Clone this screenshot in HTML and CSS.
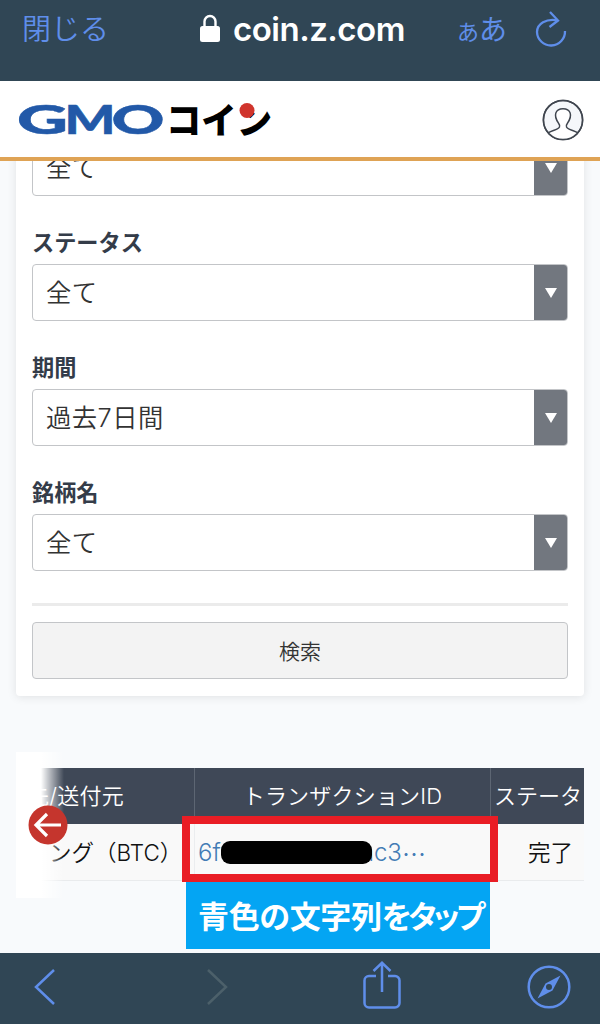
FILE: index.html
```
<!DOCTYPE html>
<html lang="ja">
<head>
    <meta charset="UTF-8">
    <meta name="viewport" content="width=device-width, initial-scale=1.0">
    <title>GMOコイン</title>
    <link rel="stylesheet" href="styles.css">
</head>
<body>
    <!-- browser bar -->
    <div class="browser-bar">
        <span class="close">閉じる</span>
        <div class="address">
            <svg class="lock" width="20" height="29" viewBox="0 0 20 29">
                <path d="M4.5 14V7.5a5.5 5.5 0 0 1 11 0V14" fill="none" stroke="#fff" stroke-width="2.4"/>
                <rect x="0" y="12" width="20" height="16" rx="2.5" fill="#fff"/>
            </svg>
            <span class="domain">coin.z.com</span>
        </div>
        <div class="text-size"><span class="small">あ</span><span class="large">あ</span></div>
        <svg class="reload" width="32" height="38" viewBox="0 0 32 38">
            <path d="M22.500 10.300C11 8.500 2.200 13.500 2 22a14 14 0 0 0 28-1" />
            <path d="M15 2l8 8.500-8.500 6.500" />
        </svg>
    </div>

    <header class="site-header">
        <svg class="logo" width="254" height="34" viewBox="0 0 254 34">
            <g class="logo-gmo">
                <text x="-1" y="30.500" textLength="51" lengthAdjust="spacingAndGlyphs">G</text>
                <text x="46.500" y="30.500" textLength="51" lengthAdjust="spacingAndGlyphs">M</text>
                <text x="93.500" y="30.500" textLength="53" lengthAdjust="spacingAndGlyphs">O</text>
            </g>
            <text class="logo-coin" x="148" y="30.500" textLength="106" lengthAdjust="spacingAndGlyphs">コイン</text>
            <circle cx="229" cy="7.500" r="7.500" fill="#d0342c"/>
        </svg>
        <svg class="user" width="42" height="42" viewBox="0 0 42 42">
            <circle cx="21" cy="21" r="19.6" fill="#f5f7fa"/>
            <path d="M6 34c3-2.500 10-3.500 11.500-6 .8-1.500 0-2.500-1-3.800C11 16 13.500 9.700 21 9.700S31 16 25.500 24.200c-1 1.300-1.800 2.300-1 3.800 1.500 2.500 8.500 3.500 11.500 6Q30 40.500 21 40.500T6 34z" fill="#fff" stroke="none"/>
            <path d="M6 34c3-2.500 10-3 11.500-6 .8-1.500 0-2.500-1-3.800C11 16 13.500 9.700 21 9.700S31 16 25.500 24.200c-1 1.300-1.800 2.300-1 3.800 1.500 3 8.500 3.500 11.500 6"/>
            <circle cx="21" cy="21" r="19.6"/>
        </svg>
    </header>

    <main class="content">
        <div class="card">
            <div class="select"><span>全て</span><i class="arrow"></i></div>
            <label class="label">ステータス</label>
            <div class="select"><span>全て</span><i class="arrow"></i></div>
            <label class="label">期間</label>
            <div class="select"><span>過去7日間</span><i class="arrow"></i></div>
            <label class="label">銘柄名</label>
            <div class="select"><span>全て</span><i class="arrow"></i></div>
            <hr class="line">
            <button class="search">検索</button>
        </div>

        <div class="history">
            <div class="row head">
                <div class="cell from">先/送付元</div>
                <div class="cell txid">トランザクションID</div>
                <div class="cell status">ステータ</div>
            </div>
            <div class="row">
                <div class="cell from">ング（BTC）</div>
                <div class="cell txid"><a class="link">6f<b class="mask"></b>ac3<span class="dots">…</span></a></div>
                <div class="cell status">完了</div>
            </div>
            <div class="fade"></div>
            <svg class="back-circle" width="40" height="40" viewBox="0 0 40 40">
                <circle cx="20" cy="20" r="19.500" fill="#c5352d"/>
                <path d="M33 20H8M19 9L8 20l11 11" fill="none" stroke="#fff" stroke-width="3.200"/>
            </svg>
            <div class="red-frame"></div>
            <div class="caption">青色の文字列<span class="tight">をタップ</span></div>
        </div>
    </main>

    <!-- bottom toolbar -->
    <nav class="toolbar">
        <svg class="prev" width="22" height="38" viewBox="0 0 22 38"><path d="M20 2L2 19l18 17"/></svg>
        <svg class="next" width="22" height="38" viewBox="0 0 22 38"><path d="M2 2l18 17L2 36"/></svg>
        <svg class="share" width="38" height="48" viewBox="0 0 38 48">
            <path d="M13 15H6a4.500 4.500 0 0 0-4.500 4.500V42A4.500 4.500 0 0 0 6 46.500h26a4.500 4.500 0 0 0 4.500-4.500V19.500A4.500 4.500 0 0 0 32 15h-7"/>
            <path d="M19 31V2M10.500 10L19 1.800l8.500 8.200"/>
        </svg>
        <svg class="compass" width="44" height="44" viewBox="0 0 44 44">
            <circle cx="22" cy="22" r="20.300"/>
            <path class="needle" fill-rule="evenodd" d="M33.500 10.500L25.500 25.500 10.500 33.500 18.500 18.500zM22 19a3 3 0 1 0 0 6 3 3 0 0 0 0-6z"/>
        </svg>
    </nav>
</body>
</html>
```

FILE: styles.css
```
* {
    box-sizing: border-box;
}
body {
    margin: 0;
    width: 600px;
    height: 1024px;
    display: flex;
    flex-direction: column;
    overflow: hidden;
    background-color: #f8fafc;
    font-family: "Noto Sans CJK JP", sans-serif;
    color: #333;
}
svg {
    display: block;
    flex: none;
}

/* browser bar */
.browser-bar {
    flex: none;
    height: 81px;
    display: flex;
    align-items: flex-start;
    background-color: #304655;
    color: #5f8eea;
    white-space: nowrap;
}
.close {
    width: 176px;
    margin: 7px 0 0 22px;
    font-size: 29px;
    line-height: 40px;
    font-weight: 350;
}
.address {
    display: flex;
    width: 259px;
    color: #fff;
}
.lock {
    margin: 14px 13px 0 2px;
}
.domain {
    font-family: Inter, sans-serif;
    font-size: 33px;
    line-height: 40px;
    font-weight: 600;
    letter-spacing: -0.500px;
    margin-top: 9px;
}
.text-size {
    display: flex;
    align-items: baseline;
    width: 78px;
    margin-top: 8px;
    line-height: 40px;
}
.text-size .small {
    font-size: 22px;
}
.text-size .large {
    font-size: 28px;
}
.reload {
    margin-top: 10px;
    fill: none;
    stroke: #5f8eea;
    stroke-width: 2.300;
}

/* site header */
.site-header {
    flex: none;
    height: 80px;
    display: flex;
    justify-content: space-between;
    align-items: flex-start;
    padding: 18px 16px 0 18px;
    background-color: #fff;
    border-bottom: 4px solid #dfa355;
}
.logo {
    margin-top: 4px;
    overflow: visible;
}
.logo-gmo {
    font-family: Lato, sans-serif;
    font-size: 39px;
    font-weight: 900;
    fill: #2259a8;
    stroke: #2259a8;
    stroke-width: 0.500;
}
.logo-coin {
    font-size: 36px;
    font-weight: 900;
    fill: #000;
}
.user {
    fill: none;
    stroke: #40464f;
    stroke-width: 1.500;
}

/* search form */
.content {
    flex: 1;
    min-height: 0;
    overflow: hidden;
    padding: 0 16px;
}
.card {
    margin-top: -22px;
    height: 557px;
    padding: 0 16px;
    background-color: #fff;
    border-radius: 4px;
    box-shadow: 0 1px 10px rgba(0,0,0,0.1);
}
.label {
    display: block;
    height: 28px;
    margin: 31px 0 9px;
    color: #343c49;
    font-size: 22.200px;
    line-height: 28px;
    font-weight: bold;
}
.select {
    height: 57px;
    display: flex;
    justify-content: space-between;
    padding-left: 13px;
    border: 1px solid #c3c5c8;
    border-radius: 4px;
    overflow: hidden;
    font-family: Inter, "Noto Sans CJK JP", sans-serif;
    font-size: 25.300px;
    line-height: 55px;
    font-weight: 350;
    letter-spacing: 0.500px;
}
.arrow {
    width: 33px;
    display: flex;
    justify-content: center;
    align-items: center;
    background-color: #72777f;
}
.arrow::before {
    content: "";
    border: 6.500px solid transparent;
    border-top: 10px solid #fff;
    border-bottom: 0;
}
.line {
    height: 3px;
    margin: 32px 0 16px;
    border: 0;
    background-color: #ebebeb;
}
.search {
    display: block;
    width: 100%;
    height: 57px;
    padding: 0 0 2px;
    background-color: #f3f3f3;
    border: 1px solid #c3c5c8;
    border-radius: 4px;
    color: #333;
    font-family: inherit;
    font-size: 21px;
    font-weight: 350;
}

/* history table */
.history {
    position: relative;
    margin-top: 72px;
}
.row {
    display: flex;
    height: 57px;
    overflow: hidden;
    background-color: #f9f9f9;
    border-bottom: 1px solid #e9ebed;
    color: #111;
    font-family: Inter, "Noto Sans CJK JP", sans-serif;
    font-size: 22.500px;
    line-height: 57px;
    font-weight: 350;
    white-space: nowrap;
}
.head {
    height: 56px;
    border: 0;
    background-color: #3f4857;
    color: #fff;
    font-size: 22px;
}
.cell {
    flex: none;
    border-right: 1px solid #ebedef;
}
.head .cell {
    border-color: #5d6673;
}
.from {
    width: 179px;
    padding-left: 33px;
}
.head .from {
    padding-left: 11px;
    letter-spacing: 0.3px;
}
.txid {
    width: 296px;
    padding-left: 3px;
}
.head .txid {
    padding-left: 0;
    text-align: center;
    letter-spacing: 0.2px;
}
.status {
    width: 100px;
    padding-left: 37px;
    border: 0;
}
.head .status {
    padding-left: 3px;
}
.link {
    display: flex;
    align-items: center;
    color: #437cb5;
    font-size: 24px;
}
.mask {
    width: 151px;
    height: 23px;
    margin-right: -11px;
    border-radius: 9px;
    background-color: #000;
    z-index: 1;
}
.dots {
    font-family: "Noto Sans CJK JP", sans-serif;
}
.fade {
    position: absolute;
    left: 0;
    top: -16px;
    width: 48px;
    height: 146px;
    background: linear-gradient(to right, #fff 52%, rgba(255,255,255,0));
}
.back-circle {
    position: absolute;
    left: 12px;
    top: 37px;
}
.red-frame {
    position: absolute;
    left: 166px;
    top: 48px;
    width: 316px;
    height: 66px;
    border: 8px solid #e91d25;
}
.caption {
    position: absolute;
    left: 170px;
    top: 114px;
    width: 304px;
    height: 67px;
    padding-left: 12px;
    background-color: #04a5f3;
    color: #fff;
    font-size: 31px;
    line-height: 65px;
    font-weight: bold;
    font-feature-settings: "palt";
    letter-spacing: -0.3px;
    white-space: nowrap;
}
.tight {
    letter-spacing: -3.200px;
}

/* bottom toolbar */
.toolbar {
    flex: none;
    height: 71px;
    display: flex;
    align-items: flex-start;
    background-color: #304655;
}
.toolbar svg {
    fill: none;
    stroke: #5f8eea;
    stroke-width: 2.500;
}
.prev {
    margin: 15px 0 0 34px;
}
.next {
    margin: 15px 0 0 150px;
}
.toolbar .next {
    stroke: #4c606a;
}
.share {
    margin: 8px 0 0 135px;
}
.compass {
    margin: 12px 0 0 126px;
}
.toolbar .needle {
    fill: #5f8eea;
    stroke: none;
}
```
